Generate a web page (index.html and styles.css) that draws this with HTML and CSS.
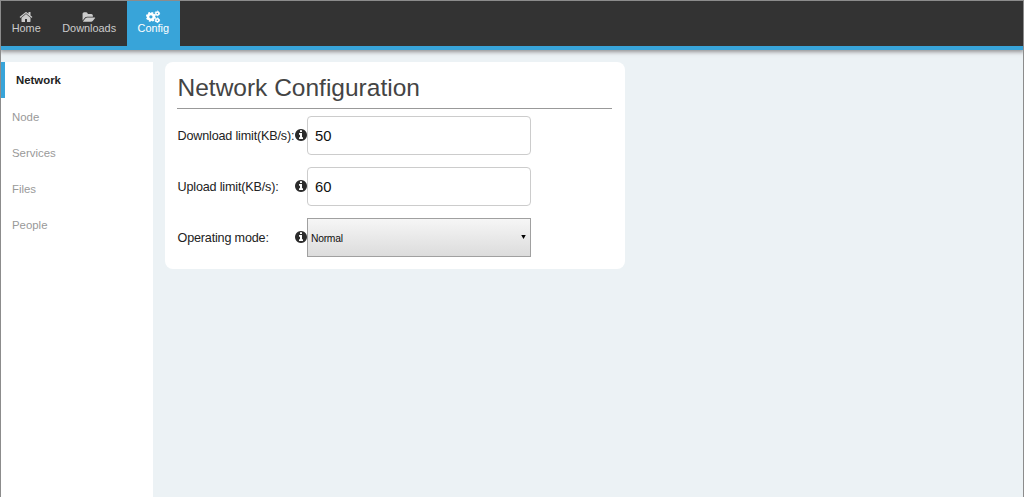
FILE: index.html
```html
<!DOCTYPE html>
<html lang="en">
<head>
<meta charset="utf-8">
<title>Network Configuration</title>
<link rel="stylesheet" href="styles.css">
</head>
<body>
<svg class="defs" aria-hidden="true">
  <symbol id="info" viewBox="128 128 1536 1536"><path d="M1152 1376v-160q0-14-9-23t-23-9h-96v-512q0-14-9-23t-23-9h-320q-14 0-23 9t-9 23v160q0 14 9 23t23 9h96v320h-96q-14 0-23 9t-9 23v160q0 14 9 23t23 9h448q14 0 23-9t9-23zm-128-896v-160q0-14-9-23t-23-9h-192q-14 0-23 9t-9 23v160q0 14 9 23t23 9h192q14 0 23-9t9-23zm640 416q0 209-103 385.5t-279.5 279.5-385.5 103-385.5-103-279.5-279.5-103-385.5 103-385.5 279.5-279.5 385.5-103 385.5 103 279.5 279.5 103 385.5z"/></symbol>
</svg>
<div class="app">
  <nav class="topbar">
    <a class="tab"><svg class="tab-icon" viewBox="0 0 1792 1792"><path d="M1472 992v480q0 26-19 45t-45 19h-384v-384h-256v384h-384q-26 0-45-19t-19-45v-480q0-1 .5-3t.5-3l575-474 575 474q1 2 1 6zm223-69l-62 74q-8 9-21 11h-3q-13 0-21-7l-692-577-692 577q-12 8-24 7-13-2-21-11l-62-74q-8-10-7-23.5t11-21.5l719-599q32-26 76-26t76 26l244 204v-195q0-14 9-23t23-9h192q14 0 23 9t9 23v408l219 182q10 8 11 21.5t-7 23.5z"/></svg><span>Home</span></a>
    <a class="tab"><svg class="tab-icon folder" viewBox="0 0 1792 1792"><path d="M1815 952q0 31-31 66l-336 396q-43 51-120.5 86.5t-143.5 35.5h-1088q-34 0-60.5-13t-26.5-43q0-31 31-66l336-396q43-51 120.5-86.5t143.5-35.5h1088q34 0 60.5 13t26.5 43zm-343-344v160h-832q-94 0-197 47.5t-164 119.5l-337 396-5 6q0-4-.5-12.5t-.5-12.5v-960q0-92 66-158t158-66h320q92 0 158 66t66 158v32h544q92 0 158 66t66 158z"/></svg><span>Downloads</span></a>
    <a class="tab active"><svg class="tab-icon" viewBox="0 0 14 13"><g class="gear"><circle cx="4.9" cy="6.3" r="2.9" stroke-width="2.5"/><circle cx="4.9" cy="6.3" r="4.1" stroke-width="1.7" stroke-dasharray="1.8 1.42"/><circle cx="11.3" cy="2.9" r="1.5" stroke-width="1.5"/><circle cx="11.3" cy="2.9" r="2.3" stroke-width="1" stroke-dasharray="1.3 1.1"/><circle cx="11.3" cy="9.7" r="1.5" stroke-width="1.5"/><circle cx="11.3" cy="9.7" r="2.3" stroke-width="1" stroke-dasharray="1.3 1.1"/></g></svg><span>Config</span></a>
  </nav>
  <div class="body">
    <aside class="sidebar">
      <a class="side-link current">Network</a>
      <a class="side-link">Node</a>
      <a class="side-link">Services</a>
      <a class="side-link">Files</a>
      <a class="side-link">People</a>
    </aside>
    <main class="card">
      <h1>Network Configuration</h1>
      <div class="row"><label>Download limit(KB/s):</label><svg class="info"><use href="#info"/></svg><input class="field" type="text" value="50"></div>
      <div class="row"><label>Upload limit(KB/s):</label><svg class="info"><use href="#info"/></svg><input class="field" type="text" value="60"></div>
      <div class="row"><label>Operating mode:</label><svg class="info"><use href="#info"/></svg><div class="select"><span>Normal</span><svg class="arrow" viewBox="0 0 6 6"><path d="M.3 .5h5.4L3 5.5z"/></svg></div></div>
    </main>
  </div>
</div>
</body>
</html>
```
FILE: styles.css
```css
* { box-sizing: border-box; }
body { margin: 0; font-family: "Liberation Sans", Arial, sans-serif; }
.defs { display: none; }
.app {
  height: 497px;
  border: 1px solid #8c8c8c;
  border-bottom: 0;
  background: #ecf2f5;
  display: flex;
  flex-direction: column;
  overflow: hidden;
}
.topbar {
  height: 49px;
  flex: none;
  display: flex;
  background: #333;
  border-bottom: 4px solid #38a4d9;
  box-shadow: 0 1px 4px 1px rgba(60, 50, 50, .5);
}
.tab {
  display: flex;
  flex-direction: column;
  align-items: center;
  padding: 9px 10.8px 0 10.7px;
  color: #ccc;
  font-size: 10.9px;
  line-height: 12px;
}
.tab.active { background: #38a4d9; color: #fff; }
.tab-icon { width: 14px; height: 14px; margin-bottom: -2px; fill: currentColor; overflow: visible; }
.tab-icon.folder { width: 12px; padding-top: 1px; }
.gear { fill: none; stroke: currentColor; }
.body { flex: 1; display: flex; align-items: flex-start; gap: 12px; padding-top: 12px; }
.sidebar { width: 152px; height: 436px; background: #fff; }
.side-link {
  display: block;
  height: 36px;
  padding-left: 11px;
  line-height: 36px;
  font-size: 11.4px;
  color: #999;
}
.side-link.current {
  border-left: 4px solid #38a4d9;
  margin-bottom: 1px;
  font-weight: bold;
  color: #222;
}
.card {
  width: 460px;
  height: 207px;
  padding: 11px 13px 12px 12px;
  background: #fff;
  border-radius: 8px;
}
h1 {
  margin: 0 0 7px;
  padding-left: .5px;
  height: 36px;
  line-height: 29px;
  font-size: 24.5px;
  font-weight: normal;
  color: #444;
  border-bottom: 1px solid #999;
}
.row { display: flex; align-items: center; height: 39px; margin-bottom: 12px; color: #222; }
.row label { width: 118px; padding-left: .5px; font-size: 12.6px; letter-spacing: -.17px; white-space: nowrap; }
.info { width: 12px; height: 12px; margin-bottom: 1px; fill: #2b2b2b; flex: none; }
.field {
  width: 224px;
  height: 39px;
  padding: 0 7px;
  border: 1px solid #ccc;
  border-radius: 4px;
  background: #fff;
  font: 14.8px "Liberation Sans", Arial, sans-serif;
  color: #111;
}
.select {
  width: 224px;
  height: 39px;
  padding: 1px 4px 0 3px;
  display: flex;
  align-items: center;
  justify-content: space-between;
  border: 1px solid #a0a0a0;
  background: linear-gradient(#f6f6f6, #dcdcdc);
  font-size: 10.3px;
  letter-spacing: -.25px;
  color: #111;
}
.arrow { width: 5px; height: 6px; margin-bottom: 2px; fill: #000; }
```
